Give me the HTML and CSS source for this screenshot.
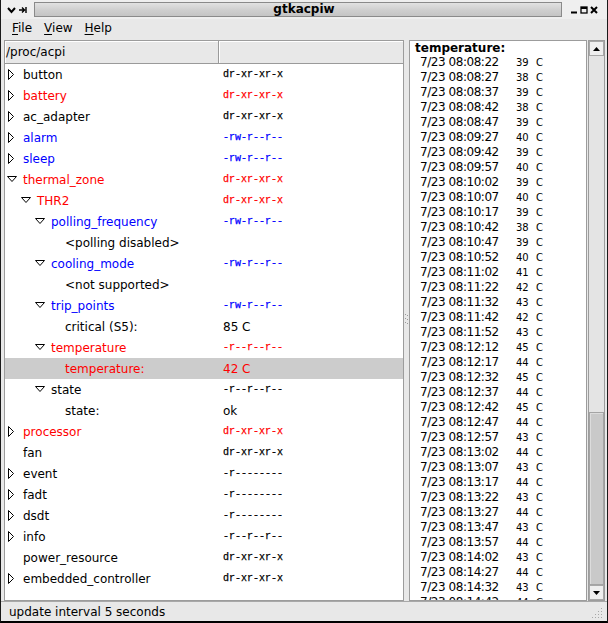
FILE: index.html
```html
<!DOCTYPE html>
<html>
<head>
<meta charset="utf-8">
<title>gtkacpiw</title>
<link rel="stylesheet" href="styles.css">
</head>
<body>
<div class="window">
  <div class="titlebar">
    <div class="tb-left">
      <svg width="9" height="8" viewBox="0 0 9 8"><path d="M1 2 L4.5 6 L8 2" fill="none" stroke="#000" stroke-width="2"/></svg>
      <svg width="8" height="8" viewBox="0 0 8 8"><path d="M0 4 H5 M3 1.5 L5.5 4 L3 6.5 M7 1 V7" fill="none" stroke="#000" stroke-width="1.4"/></svg>
    </div>
    <div class="tb-bar"><span class="tb-title">gtkacpiw</span></div>
    <div class="tb-right">
      <svg width="8" height="8" viewBox="0 0 8 8"><rect x="1" y="5.5" width="6" height="2" fill="#000"/></svg>
      <svg width="8" height="8" viewBox="0 0 8 8"><rect x="1" y="1" width="6" height="6" fill="none" stroke="#000" stroke-width="1.3"/><rect x="1" y="1" width="6" height="2" fill="#000"/></svg>
      <svg width="8" height="8" viewBox="0 0 8 8"><path d="M1 1 L7 7 M7 1 L1 7" stroke="#000" stroke-width="2"/></svg>
    </div>
  </div>

  <div class="menubar">
    <span class="menu"><u>F</u>ile</span>
    <span class="menu"><u>V</u>iew</span>
    <span class="menu"><u>H</u>elp</span>
  </div>

  <div class="main">
    <div class="tree">
      <div class="thead">
        <div class="th th1">/proc/acpi</div>
        <div class="th th2"></div>
      </div>
      <div class="tbody">
        <div class="row"><div class="c1"><svg class="ex" width="18" height="21"><path d="M3.5 5.5 L8.5 10.5 L3.5 15.5 Z"/></svg><span>button</span></div><div class="c2 perm">dr-xr-xr-x</div></div>
        <div class="row red"><div class="c1"><svg class="ex" width="18" height="21"><path d="M3.5 5.5 L8.5 10.5 L3.5 15.5 Z"/></svg><span>battery</span></div><div class="c2 perm">dr-xr-xr-x</div></div>
        <div class="row"><div class="c1"><svg class="ex" width="18" height="21"><path d="M3.5 5.5 L8.5 10.5 L3.5 15.5 Z"/></svg><span>ac_adapter</span></div><div class="c2 perm">dr-xr-xr-x</div></div>
        <div class="row blue"><div class="c1"><svg class="ex" width="18" height="21"><path d="M3.5 5.5 L8.5 10.5 L3.5 15.5 Z"/></svg><span>alarm</span></div><div class="c2 perm">-rw-r--r--</div></div>
        <div class="row blue"><div class="c1"><svg class="ex" width="18" height="21"><path d="M3.5 5.5 L8.5 10.5 L3.5 15.5 Z"/></svg><span>sleep</span></div><div class="c2 perm">-rw-r--r--</div></div>
        <div class="row red"><div class="c1"><svg class="ex" width="18" height="21"><path d="M2.5 7.5 H11.5 L7 12.5 Z"/></svg><span>thermal_zone</span></div><div class="c2 perm">dr-xr-xr-x</div></div>
        <div class="row red"><div class="c1 l1"><svg class="ex" width="18" height="21"><path d="M2.5 7.5 H11.5 L7 12.5 Z"/></svg><span>THR2</span></div><div class="c2 perm">dr-xr-xr-x</div></div>
        <div class="row blue"><div class="c1 l2"><svg class="ex" width="18" height="21"><path d="M2.5 7.5 H11.5 L7 12.5 Z"/></svg><span>polling_frequency</span></div><div class="c2 perm">-rw-r--r--</div></div>
        <div class="row"><div class="c1 l3"><span class="noex"></span><span>&lt;polling disabled&gt;</span></div><div class="c2"></div></div>
        <div class="row blue"><div class="c1 l2"><svg class="ex" width="18" height="21"><path d="M2.5 7.5 H11.5 L7 12.5 Z"/></svg><span>cooling_mode</span></div><div class="c2 perm">-rw-r--r--</div></div>
        <div class="row"><div class="c1 l3"><span class="noex"></span><span>&lt;not supported&gt;</span></div><div class="c2"></div></div>
        <div class="row blue"><div class="c1 l2"><svg class="ex" width="18" height="21"><path d="M2.5 7.5 H11.5 L7 12.5 Z"/></svg><span>trip_points</span></div><div class="c2 perm">-rw-r--r--</div></div>
        <div class="row"><div class="c1 l3"><span class="noex"></span><span>critical (S5):</span></div><div class="c2 val">85 C</div></div>
        <div class="row red"><div class="c1 l2"><svg class="ex" width="18" height="21"><path d="M2.5 7.5 H11.5 L7 12.5 Z"/></svg><span>temperature</span></div><div class="c2 perm">-r--r--r--</div></div>
        <div class="row red selected"><div class="c1 l3"><span class="noex"></span><span>temperature:</span></div><div class="c2 val">42 C</div></div>
        <div class="row"><div class="c1 l2"><svg class="ex" width="18" height="21"><path d="M2.5 7.5 H11.5 L7 12.5 Z"/></svg><span>state</span></div><div class="c2 perm">-r--r--r--</div></div>
        <div class="row"><div class="c1 l3"><span class="noex"></span><span>state:</span></div><div class="c2 val">ok</div></div>
        <div class="row red"><div class="c1"><svg class="ex" width="18" height="21"><path d="M3.5 5.5 L8.5 10.5 L3.5 15.5 Z"/></svg><span>processor</span></div><div class="c2 perm">dr-xr-xr-x</div></div>
        <div class="row"><div class="c1"><span class="noex"></span><span>fan</span></div><div class="c2 perm">dr-xr-xr-x</div></div>
        <div class="row"><div class="c1"><svg class="ex" width="18" height="21"><path d="M3.5 5.5 L8.5 10.5 L3.5 15.5 Z"/></svg><span>event</span></div><div class="c2 perm">-r--------</div></div>
        <div class="row"><div class="c1"><svg class="ex" width="18" height="21"><path d="M3.5 5.5 L8.5 10.5 L3.5 15.5 Z"/></svg><span>fadt</span></div><div class="c2 perm">-r--------</div></div>
        <div class="row"><div class="c1"><svg class="ex" width="18" height="21"><path d="M3.5 5.5 L8.5 10.5 L3.5 15.5 Z"/></svg><span>dsdt</span></div><div class="c2 perm">-r--------</div></div>
        <div class="row"><div class="c1"><svg class="ex" width="18" height="21"><path d="M3.5 5.5 L8.5 10.5 L3.5 15.5 Z"/></svg><span>info</span></div><div class="c2 perm">-r--r--r--</div></div>
        <div class="row"><div class="c1"><span class="noex"></span><span>power_resource</span></div><div class="c2 perm">dr-xr-xr-x</div></div>
        <div class="row"><div class="c1"><svg class="ex" width="18" height="21"><path d="M3.5 5.5 L8.5 10.5 L3.5 15.5 Z"/></svg><span>embedded_controller</span></div><div class="c2 perm">dr-xr-xr-x</div></div>
      </div>
    </div>

    <div class="handle">
      <svg width="5" height="12" viewBox="0 0 5 12"><g fill="#9a9a9a"><rect x="1" y="1" width="1" height="1"/><rect x="3" y="2" width="1" height="1"/><rect x="1" y="5" width="1" height="1"/><rect x="3" y="6" width="1" height="1"/><rect x="1" y="9" width="1" height="1"/><rect x="3" y="10" width="1" height="1"/></g></svg>
    </div>

    <div class="logpane">
      <div class="log">
        <div class="log-head">temperature:</div>
        <div class="ln"><span class="t">7/23 08:08:22</span><span class="v">39</span><span class="u">C</span></div>
        <div class="ln"><span class="t">7/23 08:08:27</span><span class="v">38</span><span class="u">C</span></div>
        <div class="ln"><span class="t">7/23 08:08:37</span><span class="v">39</span><span class="u">C</span></div>
        <div class="ln"><span class="t">7/23 08:08:42</span><span class="v">38</span><span class="u">C</span></div>
        <div class="ln"><span class="t">7/23 08:08:47</span><span class="v">39</span><span class="u">C</span></div>
        <div class="ln"><span class="t">7/23 08:09:27</span><span class="v">40</span><span class="u">C</span></div>
        <div class="ln"><span class="t">7/23 08:09:42</span><span class="v">39</span><span class="u">C</span></div>
        <div class="ln"><span class="t">7/23 08:09:57</span><span class="v">40</span><span class="u">C</span></div>
        <div class="ln"><span class="t">7/23 08:10:02</span><span class="v">39</span><span class="u">C</span></div>
        <div class="ln"><span class="t">7/23 08:10:07</span><span class="v">40</span><span class="u">C</span></div>
        <div class="ln"><span class="t">7/23 08:10:17</span><span class="v">39</span><span class="u">C</span></div>
        <div class="ln"><span class="t">7/23 08:10:42</span><span class="v">38</span><span class="u">C</span></div>
        <div class="ln"><span class="t">7/23 08:10:47</span><span class="v">39</span><span class="u">C</span></div>
        <div class="ln"><span class="t">7/23 08:10:52</span><span class="v">40</span><span class="u">C</span></div>
        <div class="ln"><span class="t">7/23 08:11:02</span><span class="v">41</span><span class="u">C</span></div>
        <div class="ln"><span class="t">7/23 08:11:22</span><span class="v">42</span><span class="u">C</span></div>
        <div class="ln"><span class="t">7/23 08:11:32</span><span class="v">43</span><span class="u">C</span></div>
        <div class="ln"><span class="t">7/23 08:11:42</span><span class="v">42</span><span class="u">C</span></div>
        <div class="ln"><span class="t">7/23 08:11:52</span><span class="v">43</span><span class="u">C</span></div>
        <div class="ln"><span class="t">7/23 08:12:12</span><span class="v">45</span><span class="u">C</span></div>
        <div class="ln"><span class="t">7/23 08:12:17</span><span class="v">44</span><span class="u">C</span></div>
        <div class="ln"><span class="t">7/23 08:12:32</span><span class="v">45</span><span class="u">C</span></div>
        <div class="ln"><span class="t">7/23 08:12:37</span><span class="v">44</span><span class="u">C</span></div>
        <div class="ln"><span class="t">7/23 08:12:42</span><span class="v">45</span><span class="u">C</span></div>
        <div class="ln"><span class="t">7/23 08:12:47</span><span class="v">44</span><span class="u">C</span></div>
        <div class="ln"><span class="t">7/23 08:12:57</span><span class="v">43</span><span class="u">C</span></div>
        <div class="ln"><span class="t">7/23 08:13:02</span><span class="v">44</span><span class="u">C</span></div>
        <div class="ln"><span class="t">7/23 08:13:07</span><span class="v">43</span><span class="u">C</span></div>
        <div class="ln"><span class="t">7/23 08:13:17</span><span class="v">44</span><span class="u">C</span></div>
        <div class="ln"><span class="t">7/23 08:13:22</span><span class="v">43</span><span class="u">C</span></div>
        <div class="ln"><span class="t">7/23 08:13:27</span><span class="v">44</span><span class="u">C</span></div>
        <div class="ln"><span class="t">7/23 08:13:47</span><span class="v">43</span><span class="u">C</span></div>
        <div class="ln"><span class="t">7/23 08:13:57</span><span class="v">44</span><span class="u">C</span></div>
        <div class="ln"><span class="t">7/23 08:14:02</span><span class="v">43</span><span class="u">C</span></div>
        <div class="ln"><span class="t">7/23 08:14:27</span><span class="v">44</span><span class="u">C</span></div>
        <div class="ln"><span class="t">7/23 08:14:32</span><span class="v">43</span><span class="u">C</span></div>
        <div class="ln"><span class="t">7/23 08:14:42</span><span class="v">44</span><span class="u">C</span></div>
      </div>
      <div class="scrollbar">
        <div class="sb-btn"><svg width="7" height="4" viewBox="0 0 7 4"><path d="M0 4 L3.5 0 L7 4 Z" fill="#000"/></svg></div>
        <div class="sb-trough">
          <div class="sb-space"></div>
          <div class="sb-thumb"></div>
        </div>
        <div class="sb-btn"><svg width="7" height="4" viewBox="0 0 7 4"><path d="M0 0 L7 0 L3.5 4 Z" fill="#000"/></svg></div>
      </div>
    </div>
  </div>

  <div class="statusbar">
    <span class="status-text">update interval 5 seconds</span>
    <svg class="grip" width="14" height="14" viewBox="0 0 14 14"><g fill="#a8a8a8"><rect x="11" y="2" width="1" height="1"/><rect x="8" y="5" width="1" height="1"/><rect x="11" y="5" width="1" height="1"/><rect x="5" y="8" width="1" height="1"/><rect x="8" y="8" width="1" height="1"/><rect x="11" y="8" width="1" height="1"/><rect x="2" y="11" width="1" height="1"/><rect x="5" y="11" width="1" height="1"/><rect x="8" y="11" width="1" height="1"/><rect x="11" y="11" width="1" height="1"/></g></svg>
  </div>
</div>
</body>
</html>
```

FILE: styles.css
```css
* { box-sizing: border-box; }

html, body {
  margin: 0;
  padding: 0;
  background: #e8e8e8;
}

body {
  font-family: "DejaVu Sans", "Noto Sans", sans-serif;
  font-size: 12px;
  color: #000;
}

.window {
  width: 608px;
  height: 623px;
  background: #e8e8e8;
  border-left: 1px solid #1a1a1a;
  border-right: 1px solid #1a1a1a;
  border-bottom: 2px solid #000;
  display: flex;
  flex-direction: column;
  overflow: hidden;
}

/* title bar */
.titlebar {
  height: 19px;
  flex: none;
  display: flex;
  align-items: center;
  background: #efefef;
}

.tb-left {
  width: 33px;
  flex: none;
  display: flex;
  align-items: center;
  gap: 3px;
  padding-left: 6px;
}

.tb-bar {
  width: 528px;
  height: 15px;
  flex: none;
  border: 1px solid #8a8a8a;
  background: linear-gradient(#e2e2e2, #cdcdcd 60%, #c4c4c4);
  display: flex;
  align-items: center;
  justify-content: center;
  padding-left: 12px;
}

.tb-title {
  font-weight: bold;
  font-size: 12px;
  line-height: 13px;
}

.tb-right {
  flex: 1;
  display: flex;
  align-items: center;
  gap: 2px;
  padding-left: 8px;
}

/* menu bar */
.menubar {
  height: 19px;
  flex: none;
  display: flex;
  align-items: center;
  padding-left: 5px;
}

.menu {
  padding: 0 6px;
  line-height: 17px;
}

.menu u {
  text-decoration: underline;
  text-underline-offset: 2px;
}

/* main */
.main {
  height: 563px;
  flex: none;
  display: flex;
  padding: 2px 2px 0 3px;
}

.tree {
  width: 400px;
  height: 561px;
  flex: none;
  border: 1px solid #9c9c9c;
  background: #fff;
  overflow: hidden;
}

.thead {
  display: flex;
  height: 23px;
  background: #e8e8e8;
}

.th {
  height: 23px;
  border-bottom: 1px solid #9a9a9a;
  box-shadow: inset 1px 1px 0 #fff;
  line-height: 22px;
  padding-left: 1px;
}

.th1 {
  width: 214px;
  border-right: 1px solid #9a9a9a;
}

.th2 {
  flex: 1;
}

.row {
  display: grid;
  grid-template-columns: 214px 1fr;
  height: 21px;
  align-items: center;
}

.row.red { color: #ff0000; }
.row.blue { color: #0000ff; }
.row.selected { background: #cccccc; }

.c1 {
  display: flex;
  align-items: center;
  height: 21px;
  white-space: nowrap;
}

.c1.l1 { padding-left: 14px; }
.c1.l2 { padding-left: 28px; }
.c1.l3 { padding-left: 42px; }

.ex {
  flex: none;
  display: block;
}

.ex path {
  fill: #fff;
  stroke: #000;
  stroke-width: 1;
}

.noex {
  width: 18px;
  flex: none;
}

.c2 {
  padding-left: 4px;
  white-space: nowrap;
}

.perm {
  font-family: "Liberation Mono", "DejaVu Sans Mono", monospace;
  font-size: 10px;
  -webkit-text-stroke: 0.25px currentColor;
}

.val {
  font-size: 12px;
}

/* pane handle */
.handle {
  width: 5px;
  flex: none;
  display: flex;
  align-items: center;
  justify-content: center;
  padding-bottom: 4px;
}

/* log pane */
.logpane {
  flex: 1;
  display: flex;
  gap: 1px;
  height: 561px;
}

.log {
  width: 178px;
  flex: none;
  border: 1px solid #9c9c9c;
  background: #fff;
  overflow: hidden;
  padding-left: 5px;
  white-space: nowrap;
}

.log-head {
  font-weight: bold;
  height: 14px;
  line-height: 14px;
}

.ln {
  height: 15px;
  line-height: 15px;
  padding-left: 5px;
  display: flex;
  align-items: baseline;
}

.ln .t {
  width: 96px;
  flex: none;
  letter-spacing: -0.45px;
}

.ln .v {
  width: 20px;
  flex: none;
  font-size: 10px;
}

.ln .u {
  font-size: 10px;
}

/* scrollbar */
.scrollbar {
  width: 17px;
  flex: none;
  display: flex;
  flex-direction: column;
  border: 1px solid #9c9c9c;
  background: #e4e4e4;
}

.sb-btn {
  height: 15px;
  flex: none;
  background: #efefef;
  border: 1px solid #a8a8a8;
  display: flex;
  align-items: center;
  justify-content: center;
}

.sb-trough {
  flex: 1;
  display: flex;
  flex-direction: column;
}

.sb-space {
  flex: 1;
}

.sb-thumb {
  height: 173px;
  flex: none;
  background: #c9c9c9;
  border: 1px solid #a4a4a4;
  box-shadow: inset 1px 1px 0 #dcdcdc;
}

/* status bar */
.statusbar {
  height: 20px;
  flex: none;
  border-top: 1px solid #a8a8a8;
  display: flex;
  align-items: center;
  justify-content: space-between;
  padding-left: 8px;
  padding-right: 3px;
}

.status-text {
  line-height: 18px;
}

.grip {
  display: block;
  align-self: flex-end;
  margin-bottom: 1px;
}
```
